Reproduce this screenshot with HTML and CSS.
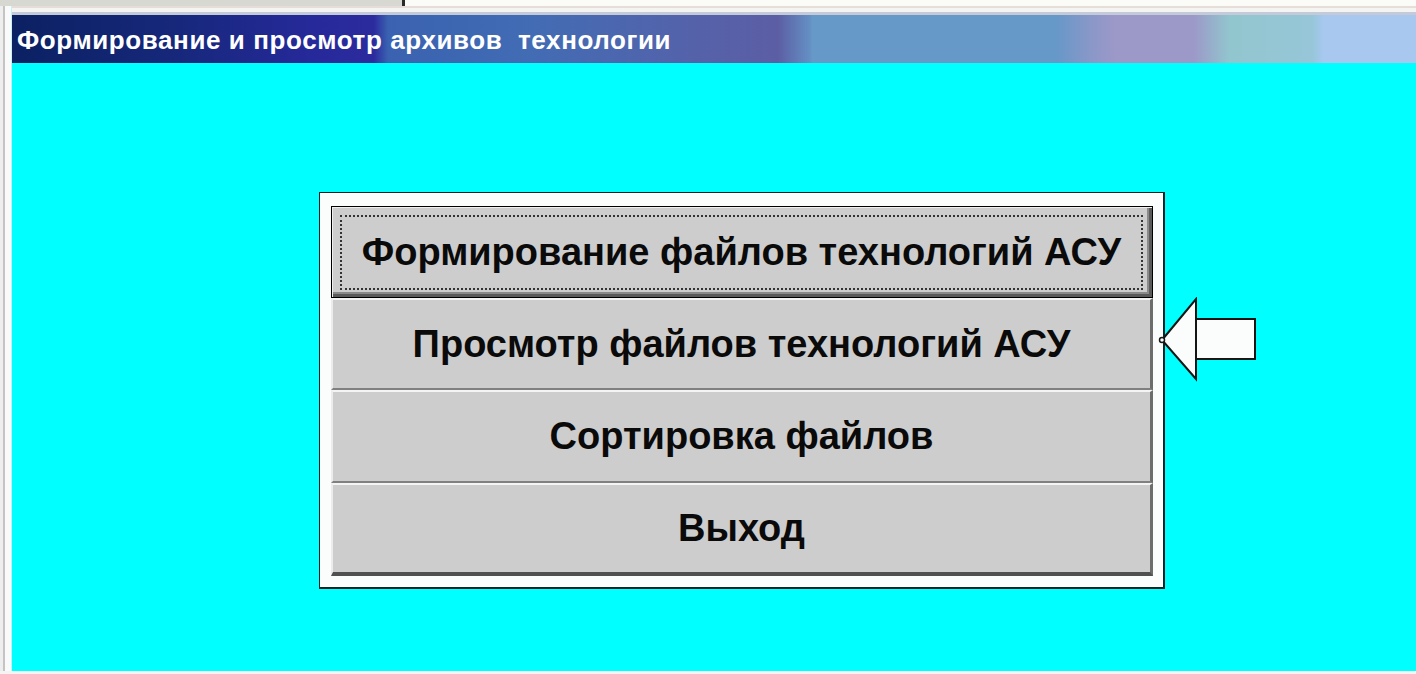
FILE: index.html
```html
<!DOCTYPE html>
<html lang="ru">
<head>
<meta charset="utf-8">
<title>Формирование и просмотр архивов технологии</title>
<link rel="stylesheet" href="styles.css">
</head>
<body>
  <div class="strip">
    <div class="strip-gray"></div>
    <div class="strip-tick"></div>
    <div class="strip-white"></div>
  </div>
  <div class="frame">
    <div class="edge"></div>
    <div class="win">
      <div class="win-top"></div>
      <div class="caption">Формирование и просмотр архивов  технологии</div>
      <div class="client">
        <div class="dialog">
          <div class="menu">
            <div class="btn btn-default"><span class="focus">Формирование файлов технологий АСУ</span></div>
            <div class="btn">Просмотр файлов технологий АСУ</div>
            <div class="btn btn-tall">Сортировка файлов</div>
            <div class="btn btn-tall btn-last">Выход</div>
          </div>
          <svg class="pointer" width="100" height="86" viewBox="0 0 100 86">
            <rect x="38" y="22" width="59" height="40" fill="#fbfdfd" stroke="#151515" stroke-width="2"/>
            <polygon points="4,43 38,2 38,82" fill="#fbfdfd" stroke="#151515" stroke-width="2" stroke-linejoin="miter"/>
            <circle cx="4" cy="43" r="2.5" fill="#fbfdfd" stroke="#151515" stroke-width="1.5"/>
          </svg>
        </div>
      </div>
    </div>
  </div>
  <div class="bottom"></div>
</body>
</html>
```

FILE: styles.css
```css
html, body {
  margin: 0;
  padding: 0;
}

body {
  width: 1416px;
  height: 674px;
  overflow: hidden;
  background: #f4f4f2;
  font-family: "Liberation Sans", Arial, sans-serif;
}

/* strip of the window behind */
.strip {
  display: flex;
  height: 6px;
}
.strip-gray {
  width: 402px;
  background: #d8d8d2;
}
.strip-tick {
  width: 3px;
  background: #2a2a2a;
}
.strip-white {
  flex: 1;
  background: #fbfbf8;
}

.frame {
  display: flex;
  height: 665px;
}

.edge {
  width: 12px;
  background: linear-gradient(to right,
    #eeeeee 0, #eeeeee 3px,
    #c4c4c4 3px, #c4c4c4 5px,
    #fafafa 5px, #fafafa 11px,
    #c6f2f2 11px);
}

.win {
  flex: 1;
  display: flex;
  flex-direction: column;
}

.win-top {
  height: 9px;
  background: linear-gradient(to bottom,
    #e6dcd8 0, #e6dcd8 2px,
    #f4f4f2 2px, #f4f4f2 6px,
    #c4cad8 6px);
}

.caption {
  height: 48px;
  line-height: 50px;
  padding-left: 5px;
  color: #ffffff;
  font-weight: bold;
  font-size: 26px;
  letter-spacing: 0.6px;
  white-space: pre;
  background: linear-gradient(to right,
    #0b2162 0px,
    #17287c 170px,
    #26299a 300px,
    #2c2b9e 362px,
    #3a62b0 376px,
    #426cb4 520px,
    #5462aa 680px,
    #5c5ea4 766px,
    #6490c4 798px,
    #6698c8 800px,
    #6698c8 1044px,
    #8a98c8 1080px,
    #9c98c8 1103px,
    #9c98c8 1181px,
    #92c6ce 1218px,
    #96c6d8 1300px,
    #a8c8f0 1312px,
    #a8c8f0 1404px);
}

.client {
  flex: 1;
  background: #00ffff;
  padding: 129px 0 0 307px;
}

.dialog {
  position: relative;
  width: 823px;
  height: 370px;
  padding: 13px 9px 11px 11px;
  background: #fbfdfd;
  border: 1px solid #142424;
  border-right-width: 2px;
  border-bottom-width: 2px;
}

.menu {
  display: flex;
  flex-direction: column;
  width: 822px;
}

.btn {
  box-sizing: border-box;
  height: 92px;
  display: flex;
  align-items: center;
  justify-content: center;
  background: #cdcdcd;
  color: #0a0a0a;
  font-size: 38px;
  font-weight: bold;
  border-top: 2px solid #f4f4f4;
  border-left: 2px solid #ececec;
  border-right: 3px solid #6c6c6c;
  border-bottom: 2px solid #808080;
}

.btn-tall {
  height: 93px;
}

.btn-last {
  border-bottom: 4px solid #505050;
}

.btn-default {
  border: 1px solid #000000;
  box-shadow: inset 1px 1px 0 #f0f0f0, inset -3px -3px 0 #5a5a5a, inset -5px -5px 0 #8a8a8a;
  padding: 8px 9px 7px 8px;
}

.focus {
  box-sizing: border-box;
  flex: 1;
  align-self: stretch;
  display: flex;
  align-items: center;
  justify-content: center;
  border: 2px dotted #333333;
}

.pointer {
  position: absolute;
  left: 838px;
  top: 104px;
}
```
